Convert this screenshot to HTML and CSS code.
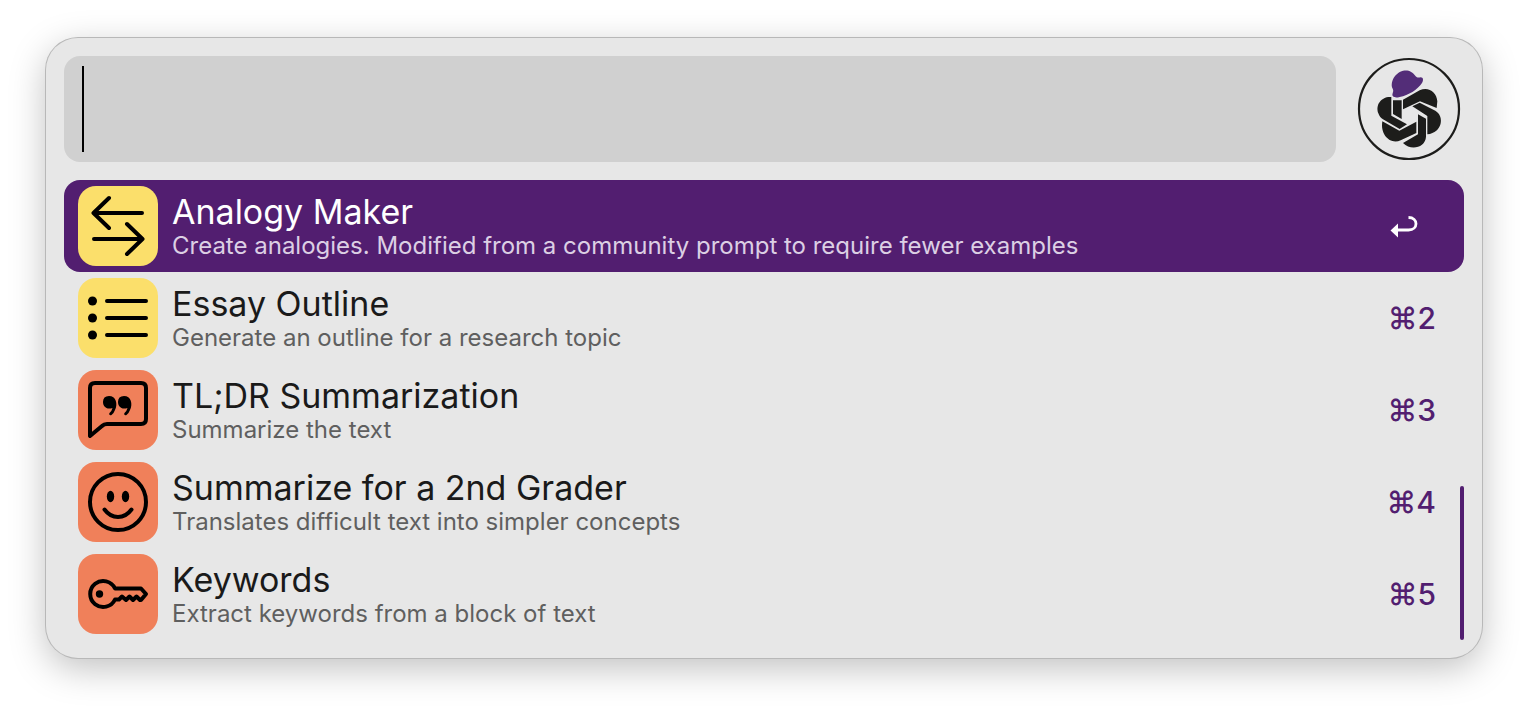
FILE: index.html
```html
<!DOCTYPE html>
<html lang="en">
<head>
<meta charset="utf-8">
<title>Prompt launcher</title>
<link rel="stylesheet" href="styles.css">
</head>
<body>
<main class="launcher">
  <form class="search">
    <div class="search-box">
      <input class="search-input" type="text" aria-label="Search prompts">
      <span class="caret"></span>
    </div>
    <svg class="logo" viewBox="0 0 102 102" aria-hidden="true">
      <circle cx="51" cy="51" r="50" fill="none" stroke="#1d1d1b" stroke-width="2.200"/>
      <g transform="translate(-8 -8) scale(.33333)">
        <path fill="#1d1d1b" d="M124 141C95 138 75 164 85 190C88 199 93 205 99 208L149 237L171 223L124 197ZM129 151H155V207L129 192ZM159 149L209 121C235 109 260 126 262 154L260 174L210 154L159 178ZM187 169L209 158L256 182C284 199 278 247 232 253V198ZM204 193L228 206V260C226 292 184 304 159 279L204 253ZM97 214L148 242L199 215V249L152 271C122 285 90 256 97 214Z"/>
        <path fill="#532d78" d="M126 112C119 72 173 40 197 79C201 84 206 83 212 82C220 82 221 91 216 99C202 119 176 136 149 141C135 145 124 141 128 130C131 122 130 120 126 112Z"/>
      </g>
    </svg>
  </form>
  <div class="results">
    <ul class="list">
      <li><button class="row selected" type="button">
        <svg class="icon yellow" viewBox="0 0 80 80" aria-hidden="true"><path d="M31 12 15.500 27 31 42M16 27H64M49 38 64.500 53 49 68M64 53H16"/></svg>
        <span class="text"><span class="title">Analogy Maker</span><span class="subtitle">Create analogies. Modified from a community prompt to require fewer examples</span></span>
        <svg class="return" viewBox="0 0 46 32" aria-label="Return"><path fill="none" stroke="#fff" stroke-width="2.800" d="M6 20H18.500C28.500 20 28.500 7.500 18.500 7.500"/><path fill="#fff" d="M0.500 20.500 8 13.500V27.500Z"/></svg>
      </button></li>
      <li><button class="row" type="button">
        <svg class="icon yellow" viewBox="0 0 80 80" aria-hidden="true"><path d="M29 23H68M29 40H68M29 57H68"/><g fill="#000" stroke="none"><circle cx="14.500" cy="23" r="4.500"/><circle cx="14.500" cy="40" r="4.500"/><circle cx="14.500" cy="57" r="4.500"/></g></svg>
        <span class="text"><span class="title">Essay Outline</span><span class="subtitle">Generate an outline for a research topic</span></span>
        <span class="key">⌘2</span>
      </button></li>
      <li><button class="row" type="button">
        <svg class="icon orange" viewBox="0 0 80 80" aria-hidden="true"><path d="M12 66V18Q12 13 17 13H63Q68 13 68 18V49Q68 54 63 54H29Q26 54 24 56Z"/><g fill="#000" stroke="none"><path id="q" d="M31 26C38 26 40 34 37 40Q36 43 33.500 45C32 46 30.500 44.500 31.500 43Q34 40.500 34.500 38C28 40 25 36 25 32Q25 26 31 26Z"/><use href="#q" x="15"/></g></svg>
        <span class="text"><span class="title">TL;DR Summarization</span><span class="subtitle">Summarize the text</span></span>
        <span class="key">⌘3</span>
      </button></li>
      <li><button class="row" type="button">
        <svg class="icon orange" viewBox="0 0 80 80" aria-hidden="true"><circle cx="40" cy="40" r="28"/><path d="M26.500 47.500Q32 55 40 55T53.500 47.500"/><g fill="#000" stroke="none"><ellipse cx="32.500" cy="34.500" rx="3.700" ry="5.700"/><ellipse cx="47.500" cy="34.500" rx="3.700" ry="5.700"/></g></svg>
        <span class="text"><span class="title">Summarize for a 2nd Grader</span><span class="subtitle">Translates difficult text into simpler concepts</span></span>
        <span class="key">⌘4</span>
      </button></li>
      <li><button class="row" type="button">
        <svg class="icon orange" viewBox="0 0 80 80" aria-hidden="true"><path d="M37 34.500A13 13 0 1 0 37 45.500H41L44 42.500 48 46 51.500 42.500 55 46 58.500 42.500 62 46H63L68 40 63 34.500Z"/><circle cx="21.500" cy="40" r="3.700" fill="#000" stroke="none"/></svg>
        <span class="text"><span class="title">Keywords</span><span class="subtitle">Extract keywords from a block of text</span></span>
        <span class="key">⌘5</span>
      </button></li>
    </ul>
    <span class="scrollbar"></span>
  </div>
</main>
</body>
</html>
```
FILE: styles.css
```css
* { box-sizing: border-box; }
body {
  margin: 0;
  padding: 38px 46px 54px;
  background: #fff;
  font-family: Inter, "Noto Sans", sans-serif;
}
.launcher {
  padding: 18px;
  border-radius: 32px;
  background: #e7e7e7;
  box-shadow: 0 0 0 1px #b8b8b8, 0 10px 36px rgba(0, 0, 0, .25);
}
.search {
  display: flex;
  align-items: center;
  gap: 22px;
  padding-right: 4px;
  margin-bottom: 18px;
}
.search-box { position: relative; flex: 1; }
.search-input {
  display: block;
  width: 100%;
  height: 106px;
  padding: 0 20px;
  border: 0;
  border-radius: 16px;
  outline: 0;
  background: #d0d0d0;
  font: 400 72px Inter, sans-serif;
}
.caret {
  position: absolute;
  top: 10px;
  bottom: 10px;
  left: 18px;
  width: 2px;
  background: #000;
}
.logo { width: 102px; height: 102px; overflow: visible; }
.results { position: relative; }
.list { margin: 0; padding: 0; list-style: none; }
.row {
  display: flex;
  align-items: center;
  gap: 14px;
  width: 100%;
  height: 92px;
  padding: 0 28px 0 14px;
  border: 0;
  border-radius: 16px;
  background: none;
  color: #1a1a1a;
  font-family: inherit;
  text-align: left;
}
.icon {
  flex: none;
  width: 80px;
  height: 80px;
  border-radius: 18px;
  fill: none;
  stroke: #000;
  stroke-width: 4;
  stroke-linecap: round;
  stroke-linejoin: round;
}
.yellow { background: #fbdf6b; }
.orange { background: #f0805a; }
.text {
  display: flex;
  flex: 1;
  flex-direction: column;
}
.title { font-size: 34px; line-height: 40px; }
.subtitle { color: #5f5f5f; font-size: 24px; line-height: 28px; }
.key { color: #521e70; font-size: 30px; font-weight: 500; }
.return { width: 46px; height: 32px; }
.selected { background: #521e70; color: #fff; }
.selected .subtitle { color: #dccfe4; }
.scrollbar {
  position: absolute;
  right: 0;
  bottom: 0;
  width: 4px;
  height: 154px;
  border-radius: 2px;
  background: #521e70;
}
```
